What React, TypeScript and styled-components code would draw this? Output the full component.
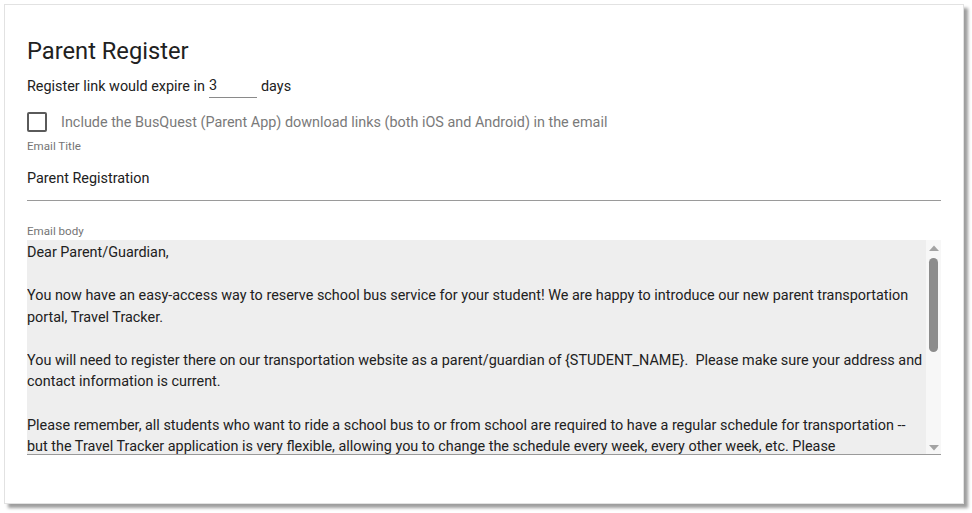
import * as React from 'react'
import styled, { createGlobalStyle } from 'styled-components'

const GlobalStyle = createGlobalStyle`
  html, body {
    margin: 0;
    padding: 0;
    background: #ffffff;
  }
  body {
    font-family: Roboto, 'Liberation Sans', Arial, sans-serif;
    color: #212121;
  }
`

const emailBody = `Dear Parent/Guardian,

You now have an easy-access way to reserve school bus service for your student! We are happy to introduce our new parent transportation portal, Travel Tracker.

You will need to register there on our transportation website as a parent/guardian of {STUDENT_NAME}.  Please make sure your address and contact information is current.

Please remember, all students who want to ride a school bus to or from school are required to have a regular schedule for transportation -- but the Travel Tracker application is very flexible, allowing you to change the schedule every week, every other week, etc. Please
{REGISTER_LINK}

Thank you,
Transportation Department`

const App = () => {
  const [expireDays, setExpireDays] = React.useState('3')
  const [includeLinks, setIncludeLinks] = React.useState(false)
  const [title, setTitle] = React.useState('Parent Registration')

  return (
    <Page>
      <GlobalStyle />
      <Card>
        <Heading>Parent Register</Heading>
        <ExpireRow>
          Register link would expire in
          <DaysInput
            value={expireDays}
            onChange={(e) => setExpireDays(e.target.value)}
          />
          days
        </ExpireRow>
        <CheckRow onClick={() => setIncludeLinks(!includeLinks)}>
          <CheckBox checked={includeLinks}>
            {includeLinks && (
              <svg width="14" height="14" viewBox="0 0 24 24">
                <path
                  d="M4 12l5 5L20 6"
                  fill="none"
                  stroke="#fff"
                  strokeWidth="3"
                />
              </svg>
            )}
          </CheckBox>
          <CheckLabel>
            Include the BusQuest (Parent App) download links (both iOS and
            Android) in the email
          </CheckLabel>
        </CheckRow>
        <FieldLabel>Email Title</FieldLabel>
        <TitleInput value={title} onChange={(e) => setTitle(e.target.value)} />
        <FieldLabel top="22px">Email body</FieldLabel>
        <BodyField>
          <BodyText>{emailBody}</BodyText>
          <ScrollTrack>
            <svg width="10" height="6" viewBox="0 0 10 6">
              <path d="M0 6L5 0.5L10 6Z" fill="#a3a3a3" />
            </svg>
            <ScrollThumb />
            <TrackSpace />
            <svg width="10" height="6" viewBox="0 0 10 6">
              <path d="M0 0L5 5.5L10 0Z" fill="#a3a3a3" />
            </svg>
          </ScrollTrack>
        </BodyField>
      </Card>
    </Page>
  )
}

export default App

const Page = styled.div`
  width: 972px;
  height: 513px;
  padding: 4px 0 0 4px;
  box-sizing: border-box;
`

const Card = styled.div`
  width: 960px;
  height: 500px;
  box-sizing: border-box;
  background: #ffffff;
  border: 1px solid #e2e2e2;
  box-shadow: 4px 4px 3px rgba(0, 0, 0, 0.38);
  padding: 30px 22px 0 22px;
  display: flex;
  flex-direction: column;
`

const Heading = styled.h1`
  margin: 0;
  font-size: 23.7px;
  font-weight: 400;
  line-height: 32px;
  color: #212121;
`

const ExpireRow = styled.div`
  display: flex;
  align-items: center;
  height: 24px;
  margin-top: 7px;
  font-size: 14.4px;
  color: #212121;
`

const DaysInput = styled.input`
  width: 48px;
  height: 22px;
  margin: 0 4px 0 4px;
  padding: 0;
  border: none;
  border-bottom: 1px solid #8a8a8a;
  outline: none;
  background: transparent;
  font-family: inherit;
  font-size: 14.4px;
  color: #212121;
`

const CheckRow = styled.div`
  display: flex;
  align-items: center;
  height: 24px;
  margin-top: 12px;
  cursor: pointer;
`

const CheckBox = styled.span<{ checked: boolean }>`
  width: 16px;
  height: 16px;
  border: 2px solid ${({ checked }) => (checked ? '#1976d2' : '#5a5a5a')};
  background: ${({ checked }) => (checked ? '#1976d2' : 'transparent')};
  border-radius: 2px;
  display: flex;
  align-items: center;
  justify-content: center;
`

const CheckLabel = styled.span`
  margin-left: 14px;
  font-size: 14.4px;
  color: #7a7a7a;
`

const FieldLabel = styled.div<{ top?: string }>`
  margin-top: ${({ top }) => top || '4px'};
  font-size: 11.6px;
  line-height: 16px;
  color: #757575;
`

const TitleInput = styled.input`
  height: 47px;
  padding: 2px 0 0 0;
  border: none;
  border-bottom: 1px solid #9a9a9a;
  outline: none;
  background: transparent;
  font-family: inherit;
  font-size: 14.4px;
  color: #212121;
  box-sizing: border-box;
`

const BodyField = styled.div`
  margin-top: 1px;
  height: 215px;
  display: flex;
  border-bottom: 1px solid #9a9a9a;
  box-sizing: border-box;
`

const BodyText = styled.div`
  flex: 1;
  padding-top: 2px;
  background: #eeeeee;
  overflow: hidden;
  white-space: pre-wrap;
  font-size: 14.4px;
  line-height: 21.56px;
  color: #212121;
`

const ScrollTrack = styled.div`
  width: 15px;
  background: #f7f7f7;
  display: flex;
  flex-direction: column;
  align-items: center;
  padding: 5px 0 3px 0;
  box-sizing: border-box;
`

const ScrollThumb = styled.div`
  width: 9px;
  height: 94px;
  margin-top: 7px;
  border-radius: 5px;
  background: #8c8c8c;
`

const TrackSpace = styled.div`
  flex: 1;
`
